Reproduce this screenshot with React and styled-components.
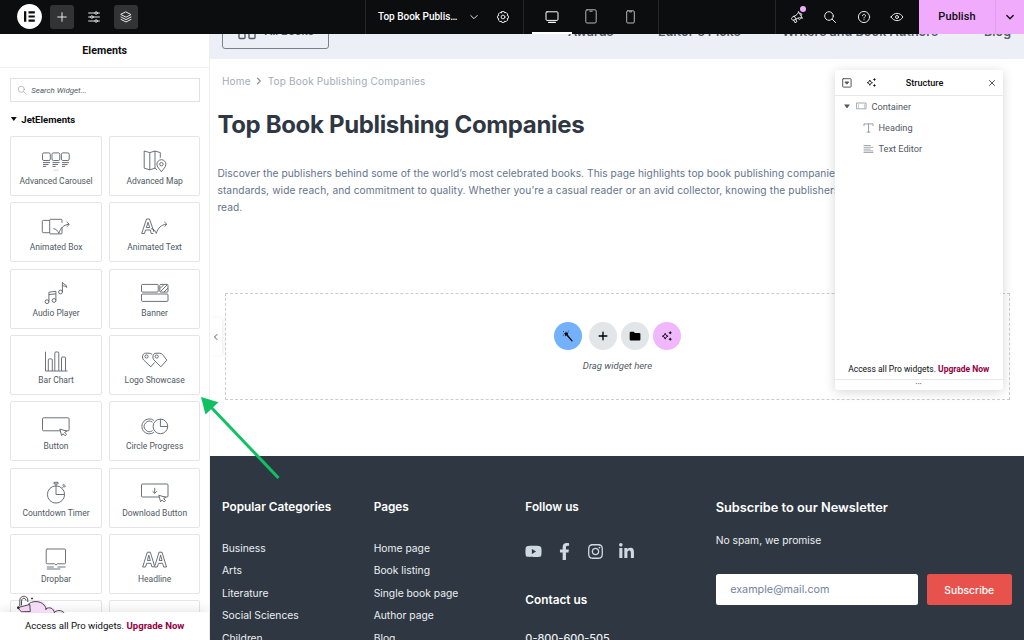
import React from 'react';
import styled, {createGlobalStyle} from 'styled-components';
import {FaYoutube, FaFacebookF, FaInstagram, FaLinkedinIn} from 'react-icons/fa';

const GlobalStyle = createGlobalStyle`
* {
box-sizing: border-box;
}
body {
margin: 0;
overflow: hidden;
font-family: Roboto, "Liberation Sans", sans-serif;
}
h1, h2, h3, p, ul {
margin: 0;
padding: 0;
}
button {
font: inherit;
border: 0;
padding: 0;
}
`;

/* ---------- top bar icons ---------- */

const Line = ({w = 14, h = 14, box = '0 0 14 14', sw = 1, children}) => (
    <svg width={w} height={h} viewBox={box} fill="none" stroke="currentColor" strokeWidth={sw}
         strokeLinecap="round" strokeLinejoin="round">{children}</svg>
);

const Logo = () => (
    <svg width="25" height="25" viewBox="0 0 25 25">
        <circle cx="12.5" cy="12.5" r="12.4" fill="#fff"/>
        <path d="M7 7.3h2.3v10.4H7zM11.5 7.3h6.3v2.1h-6.3zM11.5 11.5h6.3v2.1h-6.3zM11.5 15.6h6.3v2.1h-6.3z" fill="#0c0d0e"/>
    </svg>
);

const PlusIcon = () => <Line><path d="M7 2.7v8.6M2.7 7h8.6"/></Line>;

const SlidersIcon = () => (
    <Line>
        <path d="M1.6 3h6.2M10.4 3h2M1.6 7h2M6.2 7h6.2M1.6 11h6.2M10.4 11h2"/>
        <circle cx="9.1" cy="3" r="1.2"/>
        <circle cx="4.9" cy="7" r="1.2"/>
        <circle cx="9.1" cy="11" r="1.2"/>
    </Line>
);

const LayersIcon = () => (
    <Line>
        <path d="M7 2l5 2.6-5 2.6-5-2.6zM2 7l5 2.6L12 7M2 9.4L7 12l5-2.6"/>
    </Line>
);

const ChevronDown = ({sw = 1}) => <Line sw={sw}><path d="M3.8 5.5L7 8.7l3.2-3.2"/></Line>;

const GearIcon = () => (
    <Line>
        <path d="M5.8 1.6h2.4l.5 1.3 1.3-.5 1.7 1.7-.6 1.3 1.3.5v2.3l-1.3.5.6 1.3-1.7 1.7-1.3-.6-.5 1.3H5.8l-.5-1.3-1.3.6-1.7-1.7.6-1.3-1.3-.5V5.9l1.3-.5-.6-1.3L4 2.4l1.3.5z"/>
        <circle cx="7" cy="7" r="1.9"/>
    </Line>
);

const DesktopIcon = () => (
    <Line>
        <rect x="1" y="1.8" width="12" height="8.6" rx="1"/>
        <path d="M3.6 12.3h6.8" strokeWidth="1.2"/>
    </Line>
);

const TabletIcon = () => (
    <Line w={12} h={15} box="0 0 12 15">
        <rect x=".8" y=".8" width="10.4" height="13.2" rx="1.3"/>
        <path d="M4.8 2.2h2.4"/>
    </Line>
);

const PhoneIcon = () => (
    <Line w={9} h={14} box="0 0 9 14">
        <rect x=".7" y=".8" width="7.6" height="12.2" rx="1.1"/>
        <path d="M3.4 1.8h2.2"/>
    </Line>
);

const SpeakerIcon = () => (
    <Line>
        <path d="M8.600 1.800l3.600 6.200M8.600 1.800C8 4 6.500 5.200 4.300 6.100l-1.800 1c-.9.500-1.200 1.500-.7 2.300s1.500 1 2.300.6l2-1c2-1.300 4-1.500 6.100-1M4.300 6.100l1.800 2.900M3.700 10.200l1.300 2.500 1.900-1-1.200-2.400M8.200 8.300c.2 1.600 1.900 1.800 2.500.2M10.200 3.300c1.400-.3 2.200 1 1.300 2.100"/>
    </Line>
);

const SearchIcon = ({size = 14}) => (
    <Line w={size} h={size}>
        <circle cx="6" cy="6" r="4.3"/>
        <path d="M9.2 9.2l3.4 3.4"/>
    </Line>
);

const HelpIcon = () => (
    <Line>
        <circle cx="7" cy="7" r="5.6"/>
        <path d="M5.5 5.7c0-2 3-1.9 3 0 0 1.1-1.5 1.1-1.5 2.3M7 9.7v.1"/>
    </Line>
);

const EyeIcon = () => (
    <Line>
        <path d="M1.1 7C3.8 2.1 10.2 2.1 12.9 7 10.2 11.9 3.8 11.9 1.1 7z"/>
        <circle cx="7" cy="7" r="1.5"/>
    </Line>
);

const SparkleIcon = ({size = 12}) => (
    <svg width={size} height={size} viewBox="0 0 12 12" fill="currentColor">
        <path d="M4.2 3.3l.9 2 2 .9-2 .9-.9 2-.9-2-2-.9 2-.9z" fill="none" stroke="currentColor" strokeWidth=".9"/>
        <path d="M9.2 1l.6 1.2L11 2.8l-1.2.6-.6 1.2-.6-1.2-1.2-.6 1.2-.6zM9.2 7.4l.6 1.2 1.2.6-1.2.6-.6 1.2-.6-1.2-1.2-.6 1.2-.6z"/>
    </svg>
);

/* ---------- widget icons, all on a 30x24 grid ---------- */

const Cursor = ({x, y}) => (
    <path transform={`translate(${x} ${y})`} fill="#fff" d="M0 0l1.8 6.6 1.5-1.9 2 2.1 1.5-1.4-2-2 2.1-1.2z"/>
);

const widgets = [
    {
        name: 'Advanced Carousel',
        icon: <>
            <rect x="1.5" y="3.9" width="7.8" height="7.6" rx="1.4"/>
            <rect x="11" y="3.9" width="7.8" height="7.6" rx="1.4"/>
            <rect x="20.4" y="3.9" width="7.8" height="7.6" rx="1.4"/>
            <path d="M2 13.6h7M2 15.5h5.5M2 17.4h3.2M11.5 13.6h7M11.5 15.5h5.5M11.5 17.4h3.2M21 13.6h7M21 15.5h5.5M21 17.4h3.2"/>
            <path d="M12.8 21.2h4.4" strokeDasharray=".8 1" opacity=".6"/>
        </>,
    },
    {
        name: 'Advanced Map',
        icon: <>
            <path d="M17 20.8l-2-1.6-5.2 1.6-5.6-1.6V2l5.6 1.6L15 2l5.3 1.6v5.2M9.8 3.6v17.2M15 2v17.2"/>
            <path d="M21.4 22.8c-2-2.8-4.5-5-4.5-7.6a4.5 4.5 0 0 1 9 0c0 2.6-2.5 4.8-4.5 7.6z" fill="#fff"/>
            <circle cx="21.4" cy="15.2" r="1.7"/>
        </>,
    },
    {
        name: 'Animated Box',
        icon: <>
            <path d="M8.6 17.7H2.3a1 1 0 0 1-1-1V6.4a1 1 0 0 1 1-1h6.3"/>
            <path d="M21 12.2v5.7a1 1 0 0 1-1 1H9.7a1 1 0 0 1-1-1V5.3a1 1 0 0 1 1-1H20a1 1 0 0 1 1 1v2.5"/>
            <path d="M12.3 13.7c2.6.1 4.2 1.5 5.5 4.7 1.8-5.5 5-8.6 10-9.1M25.7 6.9l2.5 2.3-2.1 2.5"/>
        </>,
    },
    {
        name: 'Animated Text',
        icon: <>
            <path d="M1.7 18.5L6.5 4h3l4.5 13M1.7 18.5h2.7l1.2-3.5h4.7l.9 3.5h2M6.4 12.5L8 7.3l1.7 5.2z"/>
            <path d="M11 13.7c2.6.1 4 1.4 5.3 4.7 1.7-5.5 4.9-8.6 10-9.1M24.3 6.9l2.5 2.3-2.1 2.5"/>
        </>,
    },
    {
        name: 'Audio Player',
        icon: <>
            <circle cx="6" cy="20.7" r="1.9"/>
            <circle cx="13" cy="19.5" r="1.9"/>
            <path d="M7.9 20.7v-9.5l7-.9v9.2M7.9 13.7l7-.9"/>
            <circle cx="19.5" cy="11" r="1.9"/>
            <path d="M21.4 11V1.4c.5 2.3 4.6 1.5 4.3 5-1.5-1.7-2.8-1.3-4.3-1.7"/>
        </>,
    },
    {
        name: 'Banner',
        icon: <>
            <rect x="1.5" y="3.4" width="16.7" height="7.7" rx="1"/>
            <rect x="19.8" y="3.4" width="8.2" height="7.7" rx="1"/>
            <rect x="1.5" y="13" width="26.5" height="7.4" rx="1"/>
            <path d="M20 7.5l4-4M20.5 10.5l6.6-6.6M24 11l4-4"/>
        </>,
    },
    {
        name: 'Bar Chart',
        icon: <>
            <path d="M4.5 3.7V23h22"/>
            <path d="M7.3 22.8V11.9a1 1 0 0 1 1-1h2a1 1 0 0 1 1 1v10.9M13.8 22.8V5a1 1 0 0 1 1-1h2a1 1 0 0 1 1 1v17.8M20.5 22.8V10a1 1 0 0 1 1-1h2a1 1 0 0 1 1 1v12.8"/>
        </>,
    },
    {
        name: 'Logo Showcase',
        icon: <>
            <path d="M14.5 14.500l-3.700 4.300L3.700 12c-2-2-1.500-6.800 2-6.800h3.500c1.200 0 2 .4 3 1.300"/>
            <path d="M20.900 18.800L14 12c-2-2-1.400-6.800 2-6.800h3.500c1.200 0 2.100.4 3 1.300l4.300 5.600z"/>
            <circle cx="6.5" cy="8.5" r="1.6"/>
            <circle cx="16.7" cy="8.5" r="1.6"/>
        </>,
    },
    {
        name: 'Button',
        icon: <>
            <rect x="1.5" y="3.8" width="26.6" height="13" rx="1"/>
            <Cursor x={18.8} y={15}/>
        </>,
    },
    {
        name: 'Circle Progress',
        icon: <>
            <path d="M13.8 6.4a7.5 7.5 0 1 0 0 12"/>
            <path d="M12.500 8.200a5.200 5.200 0 1 0 0 8.400"/>
            <circle cx="20.4" cy="12.4" r="7.3"/>
            <path d="M20.4 5.2v7.3h7.2"/>
        </>,
    },
    {
        name: 'Countdown Timer',
        icon: <>
            <circle cx="15" cy="14.5" r="8.6"/>
            <path d="M15 4v10.5h8.5M13 2.3h4v1.6h-4zM21.5 7.8l1.1-1.2M21.6 5.3l1-1 1.9 1.8-1 1z"/>
        </>,
    },
    {
        name: 'Download Button',
        icon: <>
            <rect x="1.5" y="4" width="26.5" height="13" rx="1"/>
            <path d="M14.7 7.9v5.3M12.5 11.2l2.2 2.1 2.2-2.1"/>
            <Cursor x={18.8} y={15.2}/>
        </>,
    },
    {
        name: 'Dropbar',
        icon: <>
            <path d="M6 2h17.5a1 1 0 0 1 1 1v12.8a1 1 0 0 1-1 1h-7L15 18l-1.5-1.2H6.2a1 1 0 0 1-1-1V3a1 1 0 0 1 1-1z"/>
            <path d="M5.8 20h7M16.5 20h8M5.8 22h13.5"/>
        </>,
    },
    {
        name: 'Headline',
        icon: <>
            <path d="M2.7 20L7.3 5.2h3l4.5 14.6h-2.9l-1-3.5H6.7L5.5 20zM7.4 13.5L8.8 8.2l1.5 5.3z"/>
            <path d="M15 18.5L19 5.2h3L26.5 20h-2.8l-1-3.7h-4.2L17.3 20h-2.5M19.2 13.5l1.4-5.3 1.5 5.3z"/>
        </>,
    },
    {name: '', icon: null},
    {name: '', icon: null},
];

const categories = ['Business', 'Arts', 'Literature', 'Social Sciences', 'Children'];
const pages = ['Home page', 'Book listing', 'Single book page', 'Author page', 'Blog'];

function TopBar() {
    return (
        <Bar>
            <BarGroup $w={365}>
                <LogoSlot><Logo/></LogoSlot>
                <BarButton $active><PlusIcon/></BarButton>
                <BarButton><SlidersIcon/></BarButton>
                <BarButton $active><LayersIcon/></BarButton>
            </BarGroup>
            <BarGroup $w={158} $line>
                <DocTitle>Top Book Publis…</DocTitle>
                <BarIcon $w={28}><ChevronDown/></BarIcon>
                <BarIcon $w={30}><GearIcon/></BarIcon>
            </BarGroup>
            <BarGroup $w={135} $line>
                <Device $first $active><DesktopIcon/></Device>
                <Device><TabletIcon/></Device>
                <Device><PhoneIcon/></Device>
            </BarGroup>
            <BarGroup $w={117} $line/>
            <BarGroup $w={144} $line>
                <Tools>
                    <BarIcon $w={33.5}><SpeakerIcon/><Dot/></BarIcon>
                    <BarIcon $w={33.5}><SearchIcon/></BarIcon>
                    <BarIcon $w={33.5}><HelpIcon/></BarIcon>
                    <BarIcon $w={33.5}><EyeIcon/></BarIcon>
                </Tools>
            </BarGroup>
            <Publish>Publish</Publish>
            <PublishMore><ChevronDown sw={1.3}/></PublishMore>
        </Bar>
    );
}

function Sidebar() {
    return (
        <Side>
            <SideTitle>Elements</SideTitle>
            <SideBody>
                <Search><SearchIcon size={10}/><span>Search Widget...</span></Search>
                <Category><Caret/>JetElements</Category>
                <WidgetGrid>
                    {widgets.map((w, i) => (
                        <Widget key={i}>
                            <svg width="30" height="24" viewBox="0 0 30 24" fill="none" stroke="#515962"
                                 strokeWidth=".85" strokeLinejoin="round">{w.icon}</svg>
                            <span>{w.name}</span>
                        </Widget>
                    ))}
                </WidgetGrid>
            </SideBody>
            <Promo>
                <Cloud width="50" height="21" viewBox="0 0 50 21" fill="none" stroke="#222" strokeWidth=".8">
                    <path d="M1 13l12-3c2-6 12-7 16 0 1 1 1 3 1 4 4-3 8-1 9 3 4-2 8-1 10 3H12z" fill="#f3dcf5" stroke="none"/>
                    <path d="M11 9.5c4-4 12-4 16 .5 1.5 1.5 2 3 2 5M28.500 14c4-2.500 8-1 9 4M37.500 17c4-2.500 8-2 11 2.500"/>
                    <path d="M.8 12.5l12-3 .5 7-9 .3z" fill="#f3d4f5"/>
                    <path d="M2.8 11V5.5c0-5.5 8-5.5 8-.5v2M4.5 10.5V6c0-3.5 4.5-3.5 4.5-.5"/>
                    <path d="M15 2.500v2M14 3.500h2"/>
                    <circle cx="1.3" cy="12.7" r="1" fill="#222"/>
                </Cloud>
                <PromoText $ls={0} $size={9.6}>Access all Pro widgets. <b>Upgrade Now</b></PromoText>
            </Promo>
        </Side>
    );
}

function Footer() {
    return (
        <Foot>
            <FootCol>
                <FootTitle>Popular Categories</FootTitle>
                <Links>{categories.map(c => <li key={c}>{c}</li>)}</Links>
            </FootCol>
            <FootCol>
                <FootTitle>Pages</FootTitle>
                <Links>{pages.map(p => <li key={p}>{p}</li>)}</Links>
            </FootCol>
            <FootCol>
                <FootTitle>Follow us</FootTitle>
                <Social>
                    <FaYoutube size={17}/>
                    <FaFacebookF size={17}/>
                    <FaInstagram size={17}/>
                    <FaLinkedinIn size={17}/>
                </Social>
                <FootTitle>Contact us</FootTitle>
                <Phone>0-800-600-505</Phone>
            </FootCol>
            <Newsletter>
                <NewsTitle>Subscribe to our Newsletter</NewsTitle>
                <NewsText>No spam, we promise</NewsText>
                <NewsForm>
                    <Email>example@mail.com</Email>
                    <Subscribe>Subscribe</Subscribe>
                </NewsForm>
            </Newsletter>
        </Foot>
    );
}

function Structure() {
    return (
        <Panel>
            <PanelHead>
                <Line w={10} h={10} box="0 0 10 10">
                    <rect x=".7" y=".7" width="8.4" height="8.4" rx=".6"/>
                    <path d="M3.3 4h3.4L5 5.9z" fill="currentColor"/>
                </Line>
                <SparkleIcon size={11}/>
                <h3>Structure</h3>
                <Line w={8} h={8} box="0 0 8 8"><path d="M1.5 1.5l5 5M6.500 1.500l-5 5"/></Line>
            </PanelHead>
            <Tree>
                <TreeRow>
                    <Caret $grey/>
                    <Line w={11} h={8} box="0 0 11 8" sw={.8}>
                        <rect x=".8" y="1" width="9.200" height="5.800"/>
                        <path d="M2.400 2.500v3M8.400 2.500v3" strokeWidth=".5"/>
                    </Line>
                    Container
                </TreeRow>
                <TreeRow $nested>
                    <Line w={11} h={10} box="0 0 11 10" sw={.9}><path d="M1 2.700V.9h9v1.800M5.500.9v8.200M4 9.100h3"/></Line>
                    Heading
                </TreeRow>
                <TreeRow $nested>
                    <Line w={11} h={10} box="0 0 11 10" sw={.8}><path d="M1 1.500h6.500M1 3.300h9M1 5.100h6M1 6.900h9M1 8.500h9"/></Line>
                    Text Editor
                </TreeRow>
            </Tree>
            <PromoText $size={8.5} $ls={0}>Access all Pro widgets. <b>Upgrade Now</b></PromoText>
            <Grip>•••</Grip>
        </Panel>
    );
}

function App() {
    return (
        <>
            <GlobalStyle/>
            <Editor>
                <TopBar/>
                <Workspace>
                    <Sidebar/>
                    <Canvas>
                        <SiteNav>
                            <AllBooks>
                                <Line w={18} h={18} box="0 0 18 18" sw={1.4}>
                                    <rect x="1" y="1" width="6" height="6" rx="1"/>
                                    <rect x="11" y="1" width="6" height="6" rx="1"/>
                                    <rect x="1" y="10.5" width="6" height="6" rx="1"/>
                                    <rect x="11" y="10.5" width="6" height="6" rx="1"/>
                                </Line>
                                <NavItem $w={50}>All Books</NavItem>
                            </AllBooks>
                            <NavItem $w={90}>Awards</NavItem>
                            <NavItem $w={124}>Editor's Picks</NavItem>
                            <NavItem $w={202}>Writers and Book Authors</NavItem>
                            <NavItem $w={40}>Blog</NavItem>
                        </SiteNav>
                        <Crumbs>
                            Home
                            <Line w={6} h={8} box="0 0 6 8" sw={1.2}><path d="M1.500 1.200l2.700 2.800-2.700 2.800"/></Line>
                            Top Book Publishing Companies
                        </Crumbs>
                        <PageTitle>Top Book Publishing Companies</PageTitle>
                        <Intro>
                            <IntroLine $ls={.06}>Discover the publishers behind some of the world’s most celebrated books. This page highlights top book publishing companies</IntroLine>
                            <IntroLine $ls={.11}>standards, wide reach, and commitment to quality. Whether you’re a casual reader or an avid collector, knowing the publishers</IntroLine>
                            <IntroLine $ls={.06}>read.</IntroLine>
                        </Intro>
                        <DropZone>
                            <Actions>
                                <Round $bg="#74b1fd" $gap={7}>
                                    <svg width="12" height="12" viewBox="0 0 12 12">
                                        <path d="M5 5l5 5.8" stroke="#000" strokeWidth="1.3" strokeLinecap="round"/>
                                        <path d="M4 1.2l.7 1.5 1.9-.1-1.1 1.4.8 1.7-1.8-.5L3.2 6.4l-.1-1.8-1.5-.9 1.7-.7z"/>
                                        <path d="M1 1l.8.8M6.800.6L6.400 1.300M.8 5.500l.8-.4" stroke="#000" strokeWidth=".8"/>
                                    </svg>
                                </Round>
                                <Round $bg="#e3e6e8" $gap={3.7}><Line w={12} h={12} sw={1.6}><path d="M7 2.500v9M2.500 7h9"/></Line></Round>
                                <Round $bg="#e3e6e8" $gap={3.7}>
                                    <svg width="12" height="12" viewBox="0 0 12 12"><path d="M.7 2.700a1 1 0 0 1 1-1h3l1.200 1.400h4.500a1 1 0 0 1 1 1v5.300a1 1 0 0 1-1 1H1.700a1 1 0 0 1-1-1z"/></svg>
                                </Round>
                                <Round $bg="#f1b7fc" $gap={0}><SparkleIcon/></Round>
                            </Actions>
                            <DropHint>Drag widget here</DropHint>
                        </DropZone>
                        <Footer/>
                        <Toggle><Line w={8} h={8} box="0 0 8 8"><path d="M5 1.500L2.500 4 5 6.500"/></Line></Toggle>
                    </Canvas>
                    <Structure/>
                </Workspace>
                <Arrow width="84" height="86" viewBox="0 0 84 86">
                    <path d="M9 9l69.5 73" stroke="#10c164" strokeWidth="3"/>
                    <path d="M1 1l17.500 5.200L5.500 18.500z" fill="#10c164"/>
                </Arrow>
            </Editor>
        </>
    );
}

export default App;

const site = 'Inter, "Open Sans", sans-serif';

const Editor = styled.div`
position: relative;
display: flex;
flex-direction: column;
width: 1024px;
height: 640px;
overflow: hidden;
background: #fff;
`;

const Bar = styled.header`
display: flex;
flex: 0 0 33.5px;
background: #0c0d0e;
color: #e6e8ea;
position: relative;
z-index: 3;
`;

const BarGroup = styled.div`
display: flex;
align-items: center;
flex: 0 0 ${p => p.$w}px;
border-left: ${p => p.$line ? '1px solid #242628' : '0'};
`;

const LogoSlot = styled.div`
display: flex;
margin: 0 8px 0 16.5px;
`;

const BarButton = styled.button`
display: flex;
align-items: center;
justify-content: center;
width: 24px;
height: 24px;
margin-right: 8.3px;
border-radius: 3px;
color: inherit;
background: ${p => p.$active ? '#313335' : 'transparent'};
`;

const BarIcon = styled.div`
display: flex;
align-items: center;
justify-content: center;
position: relative;
width: ${p => p.$w}px;
`;

const DocTitle = styled.span`
width: 82px;
margin-left: 12px;
font-size: 10px;
font-weight: 500;
color: #fff;
white-space: nowrap;
`;

const Device = styled.div`
display: flex;
align-items: center;
justify-content: center;
width: 39.5px;
height: 100%;
margin-left: ${p => p.$first ? 8 : 0}px;
color: ${p => p.$active ? '#fff' : '#b4b7ba'};
border-top: 2px solid transparent;
border-bottom: 2px solid ${p => p.$active ? '#fff' : 'transparent'};
`;

const Tools = styled.div`
display: flex;
margin-left: 4px;
`;

const Dot = styled.span`
position: absolute;
top: -3.5px;
right: 7.5px;
width: 6px;
height: 6px;
border-radius: 50%;
background: #f0abfc;
`;

const Publish = styled.button`
flex: 0 0 76px;
background: #f0abfc;
color: #0c0d0e;
font-size: 11px;
font-weight: 500;
letter-spacing: .1px;
`;

const PublishMore = styled.button`
display: flex;
flex: 1;
align-items: center;
justify-content: center;
background: #f0abfc;
border-left: 1px solid #e49bf2;
color: #0c0d0e;
`;

const Workspace = styled.main`
position: relative;
display: flex;
flex: 1;
min-height: 0;
`;

const Side = styled.aside`
display: flex;
flex-direction: column;
flex: 0 0 210.4px;
position: relative;
background: #fff;
border-right: 1px solid #eeeff1;
`;

const SideTitle = styled.h2`
flex: 0 0 33.9px;
line-height: 33px;
font-size: 10.7px;
font-weight: 700;
text-align: center;
color: #0c0d0e;
border-bottom: 1px solid #eeeff1;
`;

const SideBody = styled.div`
flex: 1;
min-height: 0;
overflow: hidden;
padding: 10.5px 9px 0 10.3px;
`;

const Search = styled.div`
display: flex;
align-items: center;
gap: 4px;
height: 24px;
padding-left: 6px;
border: 1px solid #dfe1e4;
font-size: 7.9px;
font-style: italic;
color: #515962;
svg {
color: #9da5ae;
}
`;

const Category = styled.h3`
display: flex;
align-items: center;
gap: 4px;
height: 34px;
font-size: 9.6px;
font-weight: 700;
color: #0c0d0e;
`;

const Caret = styled.i`
width: 7px;
height: 4px;
background: ${p => p.$grey ? '#515962' : '#0c0d0e'};
clip-path: polygon(8% 0, 92% 0, 50% 100%);
`;

const WidgetGrid = styled.div`
display: grid;
grid-template-columns: 1fr 1fr;
grid-auto-rows: 60px;
gap: 6.35px 7px;
`;

const Widget = styled.div`
display: flex;
flex-direction: column;
align-items: center;
padding-top: 11.5px;
border: 1px solid #e3e5e8;
border-radius: 2px;
font-size: 8.5px;
line-height: 11px;
color: #515962;
white-space: nowrap;
span {
margin-top: 3.3px;
}
`;

const Promo = styled.div`
position: relative;
flex: 0 0 28px;
padding-top: 7px;
background: #fff;
box-shadow: 0 -2px 12px rgba(0, 0, 0, .1);
`;

const Cloud = styled.svg`
position: absolute;
left: 17px;
top: -17.5px;
clip-path: inset(0 0 2.5px 0);
`;

const PromoText = styled.p`
text-align: center;
font-size: ${p => p.$size}px;
letter-spacing: ${p => p.$ls}px;
line-height: 14px;
color: #0c0d0e;
white-space: nowrap;
b {
font-weight: 700;
color: #93003f;
}
`;

const Canvas = styled.section`
position: relative;
display: flex;
flex-direction: column;
flex: 1;
min-width: 0;
font-family: ${site};
`;

const SiteNav = styled.nav`
display: flex;
align-items: flex-end;
flex: 0 0 25.5px;
overflow: hidden;
background: #eceff5;
color: #555b66;
padding-left: 12px;
`;

const AllBooks = styled.div`
display: flex;
align-items: flex-end;
flex: 0 0 107px;
height: 38px;
margin: 0 238.500px 10.5px 0;
padding: 0 0 8px 15px;
gap: 8px;
border: 1.5px solid #7b818b;
border-radius: 3px;
> span {
padding: 0;
margin-bottom: 1px;
font-size: 11px;
}
`;

const NavItem = styled.span`
flex: 0 0 ${p => p.$w}px;
padding-bottom: 20.5px;
font-size: 12.6px;
line-height: 15px;
font-weight: 600;
white-space: nowrap;
`;

const Crumbs = styled.div`
display: flex;
align-items: center;
gap: 5.5px;
margin: 13.9px 0 0 11.6px;
font-size: 10px;
line-height: 16px;
letter-spacing: .18px;
color: #a2abb6;
svg {
color: #7f8a97;
}
`;

const PageTitle = styled.h1`
margin: 20px 0 0 7px;
font-size: 24px;
line-height: 32px;
font-weight: 700;
letter-spacing: -.34px;
color: #2f3742;
white-space: nowrap;
`;

const Intro = styled.div`
margin: 24.5px 0 0 7px;
font-size: 10.2px;
line-height: 17px;
color: #64748b;
white-space: nowrap;
overflow: hidden;
`;

const IntroLine = styled.p`
letter-spacing: ${p => p.$ls}px;
`;

const DropZone = styled.div`
display: flex;
flex-direction: column;
align-items: center;
flex: 0 0 106.5px;
margin: 77px 14px 0 14.5px;
padding-top: 28px;
border: 1px dashed #c9cdd2;
font-family: Roboto, sans-serif;
`;

const Actions = styled.div`
display: flex;
`;

const Round = styled.button`
display: flex;
align-items: center;
justify-content: center;
width: 28px;
height: 28px;
margin-right: ${p => p.$gap}px;
border-radius: 50%;
color: #000;
background: ${p => p.$bg};
`;

const DropHint = styled.p`
margin-top: 9px;
font-size: 9.5px;
line-height: 13px;
font-style: italic;
color: #515962;
`;

const Foot = styled.footer`
display: grid;
grid-template-columns: 151.7px 151.7px 190.3px 1fr;
flex: 1;
min-height: 0;
margin-top: 56px;
padding: 42px 12px 0 11.6px;
background: #2f3742;
overflow: hidden;
color: #eceff2;
`;

const FootCol = styled.div`
min-width: 0;
height: 100px;
`;

const FootTitle = styled.h3`
font-size: 11.8px;
line-height: 18px;
font-weight: 600;
color: #fff;
white-space: nowrap;
`;

const Links = styled.ul`
margin-top: 21px;
list-style: none;
font-size: 10.3px;
line-height: 22.5px;
white-space: nowrap;
`;

const Social = styled.div`
display: flex;
gap: 14px;
margin: 27.5px 0 30.5px;
color: #cfd9e1;
`;

const Phone = styled.p`
margin-top: 20.500px;
font-size: 10.9px;
line-height: 18px;
font-weight: 500;
`;

const Newsletter = styled.div`
min-width: 0;
`;

const NewsTitle = styled.h3`
font-size: 12.8px;
line-height: 20px;
font-weight: 600;
color: #fff;
white-space: nowrap;
`;

const NewsText = styled.p`
margin-top: 15px;
font-size: 10.3px;
line-height: 15px;
`;

const NewsForm = styled.div`
display: flex;
gap: 8.5px;
margin-top: 26px;
height: 31.5px;
`;

const Email = styled.div`
flex: 1;
padding-left: 14.5px;
border-radius: 2.5px;
background: #fff;
color: #74839a;
font-size: 10.8px;
line-height: 31px;
`;

const Subscribe = styled.button`
width: 85.5px;
border-radius: 2.5px;
background: #e8524c;
color: #fff;
font-size: 10.3px;
font-weight: 500;
`;

const Toggle = styled.div`
position: absolute;
left: 0;
top: 284.5px;
display: flex;
align-items: center;
justify-content: center;
width: 11.5px;
height: 37px;
background: #fff;
border-radius: 0 3px 3px 0;
box-shadow: 2px 0 4px rgba(0, 0, 0, .06);
color: #515962;
`;

const Panel = styled.aside`
position: absolute;
left: 835px;
top: 36.9px;
display: flex;
flex-direction: column;
width: 167.5px;
height: 319.5px;
background: #fff;
border-radius: 3px;
box-shadow: 0 2px 12px rgba(0, 0, 0, .16);
`;

const PanelHead = styled.div`
display: flex;
align-items: center;
height: 25.5px;
padding: 0 7px;
border-bottom: 1px solid #e6e8ea;
color: #515962;
h3 {
flex: 1;
text-align: center;
font-size: 9.1px;
font-weight: 500;
color: #0c0d0e;
padding-right: 15px;
}
svg:nth-of-type(2) {
margin-left: 13.5px;
color: #0c0d0e;
}
`;

const Tree = styled.div`
flex: 1;
`;

const TreeRow = styled.div`
display: flex;
align-items: center;
gap: 5px;
height: 21.2px;
padding-left: ${p => p.$nested ? 27.5 : 8.5}px;
font-size: 9.2px;
color: #515962;
svg {
color: #8e959d;
}
`;

const Grip = styled.div`
height: 10.5px;
margin-top: 3px;
border-top: 1px solid #e6e8ea;
text-align: center;
font-size: 5px;
line-height: 9px;
letter-spacing: .4px;
color: #515962;
`;

const Arrow = styled.svg`
position: absolute;
left: 200px;
top: 395.5px;
z-index: 5;
`;
